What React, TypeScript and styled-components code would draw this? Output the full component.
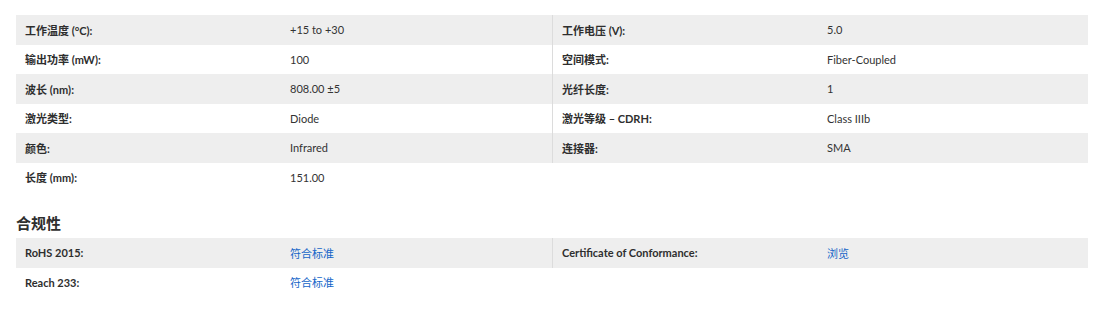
import React from "react";
import styled, { createGlobalStyle } from "styled-components";

const Global = createGlobalStyle`
  html, body { margin: 0; padding: 0; background: #fff; }
  body { font-family: Lato, "Noto Sans CJK SC", sans-serif; color: #333; }
`;

const Page = styled.div`
  padding: 15px 12px 0 16px;
  width: 1072px;
`;

const Table = styled.div`
  display: flex;
  flex-direction: column;
`;

const Row = styled.div<{ $shade: boolean }>`
  display: flex;
  height: 29.5px;
  background: ${(p) => (p.$shade ? "#eeeeee" : "#ffffff")};
`;

const Half = styled.div<{ $right?: boolean; $divider?: boolean }>`
  display: grid;
  grid-template-columns: 265px 1fr;
  align-items: center;
  width: ${(p) => (p.$right ? "536px" : "536px")};
  box-sizing: border-box;
  border-left: ${(p) => (p.$right ? (p.$divider ? "1px solid #dcdcdc" : "1px solid transparent") : "none")};
`;

const Label = styled.div`
  padding-left: 9px;
  font-size: 11px;
  font-weight: 700;
  color: #2e2e2e;
  white-space: nowrap;
`;

const Value = styled.div`
  padding-left: 9px;
  font-size: 11px;
  color: #333;
  white-space: nowrap;
`;

const LinkValue = styled.a`
  padding-left: 9px;
  font-size: 11px;
  color: #1565c8;
  text-decoration: none;
  white-space: nowrap;
`;

const Heading = styled.h3`
  margin: 22px 0 5px 0;
  font-size: 15px;
  line-height: 19px;
  font-weight: 700;
  color: #2e2e2e;
`;

type Cell = { label: string; value: string; link?: boolean } | null;

const specs: [Cell, Cell][] = [
  [{ label: "工作温度 (°C):", value: "+15 to +30" }, { label: "工作电压 (V):", value: "5.0" }],
  [{ label: "输出功率 (mW):", value: "100" }, { label: "空间模式:", value: "Fiber-Coupled" }],
  [{ label: "波长 (nm):", value: "808.00 ±5" }, { label: "光纤长度:", value: "1" }],
  [{ label: "激光类型:", value: "Diode" }, { label: "激光等级 – CDRH:", value: "Class IIIb" }],
  [{ label: "颜色:", value: "Infrared" }, { label: "连接器:", value: "SMA" }],
  [{ label: "长度 (mm):", value: "151.00" }, null],
];

const compliance: [Cell, Cell][] = [
  [
    { label: "RoHS 2015:", value: "符合标准", link: true },
    { label: "Certificate of Conformance:", value: "浏览", link: true },
  ],
  [{ label: "Reach 233:", value: "符合标准", link: true }, null],
];

const CellView = ({ cell }: { cell: Cell }) =>
  cell ? (
    <>
      <Label>{cell.label}</Label>
      {cell.link ? <LinkValue href="#">{cell.value}</LinkValue> : <Value>{cell.value}</Value>}
    </>
  ) : null;

const SpecTable = ({ rows }: { rows: [Cell, Cell][] }) => (
  <Table>
    {rows.map(([l, r], i) => (
      <Row key={i} $shade={i % 2 === 0}>
        <Half>
          <CellView cell={l} />
        </Half>
        <Half $right $divider={!!r}>
          <CellView cell={r} />
        </Half>
      </Row>
    ))}
  </Table>
);

export default function App() {
  return (
    <>
      <Global />
      <Page>
        <SpecTable rows={specs} />
        <Heading>合规性</Heading>
        <SpecTable rows={compliance} />
      </Page>
    </>
  );
}
